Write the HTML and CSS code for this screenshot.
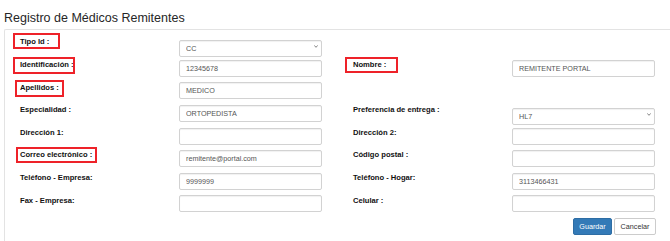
FILE: index.html
```html
<!DOCTYPE html>
<html lang="es">
<head>
  <meta charset="UTF-8" />
  <title>Registro de Médicos Remitentes</title>
  <link rel="stylesheet" href="styles.css">
</head>
<body>
  <h4 class="page-title">Registro de Médicos Remitentes</h4>
  <div class="panel">
    <form class="form">
      <div class="row">
        <div class="group">
          <label class="lbl">Tipo Id :<span class="hl hl-tipo"></span></label>
          <div class="select-wrap">
            <select class="ctrl">
              <option>CC</option>
            </select>
            <svg class="chev" width="4" height="3" viewBox="0 0 4 3"><path d="M0.3 0.4 L2 2.3 L3.7 0.4" fill="none" stroke="#777" stroke-width="0.9"/></svg>
          </div>
        </div>
      </div>
      <div class="row">
        <div class="group">
          <label class="lbl">Identificación :<span class="hl hl-ident"></span></label>
          <input class="ctrl" type="text" value="12345678">
        </div>
        <div class="group">
          <label class="lbl">Nombre :<span class="hl hl-nombre"></span></label>
          <input class="ctrl" type="text" value="REMITENTE PORTAL">
        </div>
      </div>
      <div class="row">
        <div class="group">
          <label class="lbl">Apellidos :<span class="hl hl-apell"></span></label>
          <input class="ctrl" type="text" value="MEDICO">
        </div>
      </div>
      <div class="row">
        <div class="group">
          <label class="lbl">Especialidad :</label>
          <input class="ctrl" type="text" value="ORTOPEDISTA">
        </div>
        <div class="group">
          <label class="lbl">Preferencia de entrega :</label>
          <div class="select-wrap">
            <select class="ctrl">
              <option>HL7</option>
            </select>
            <svg class="chev" width="4" height="3" viewBox="0 0 4 3"><path d="M0.3 0.4 L2 2.3 L3.7 0.4" fill="none" stroke="#777" stroke-width="0.9"/></svg>
          </div>
        </div>
      </div>
      <div class="row">
        <div class="group">
          <label class="lbl">Dirección 1:</label>
          <input class="ctrl" type="text" value="">
        </div>
        <div class="group">
          <label class="lbl">Dirección 2:</label>
          <input class="ctrl" type="text" value="">
        </div>
      </div>
      <div class="row">
        <div class="group">
          <label class="lbl">Correo electrónico :<span class="hl hl-correo"></span></label>
          <input class="ctrl" type="text" value="remitente@portal.com">
        </div>
        <div class="group">
          <label class="lbl">Código postal :</label>
          <input class="ctrl" type="text" value="">
        </div>
      </div>
      <div class="row">
        <div class="group">
          <label class="lbl">Teléfono - Empresa:</label>
          <input class="ctrl" type="text" value="9999999">
        </div>
        <div class="group">
          <label class="lbl">Teléfono - Hogar:</label>
          <input class="ctrl" type="text" value="3113466431">
        </div>
      </div>
      <div class="row">
        <div class="group">
          <label class="lbl">Fax - Empresa:</label>
          <input class="ctrl" type="text" value="">
        </div>
        <div class="group">
          <label class="lbl">Celular :</label>
          <input class="ctrl" type="text" value="">
        </div>
      </div>
      <div class="actions">
        <button type="button" class="btn btn-primary">Guardar</button>
        <button type="button" class="btn btn-default">Cancelar</button>
      </div>
    </form>
  </div>
</body>
</html>
```

FILE: styles.css
```css
html, body {
  margin: 0;
  padding: 0;
  background: #fff;
}
body {
  font-family: "Liberation Sans", Arial, sans-serif;
  color: #333;
}
.page-title {
  margin: 0;
  padding: 9px 0 0 4px;
  height: 20px;
  font-size: 12.5px;
  line-height: 18px;
  font-weight: normal;
  color: #262626;
}
.panel {
  margin-left: 4px;
  height: 212px;
  box-sizing: border-box;
  border: 1px solid #e3e3e3;
  border-right: none;
  border-bottom: none;
  border-top-left-radius: 2px;
  padding: 7.3px 0 0 15px;
}
.form {
  width: 636px;
  display: flex;
  flex-direction: column;
  gap: 5.6px;
}
.row {
  display: flex;
  gap: 31px;
  height: 17px;
}
.group {
  display: flex;
  width: 302px;
}
.lbl {
  position: relative;
  width: 159px;
  flex: none;
  padding-top: 0.2px;
  font-size: 7.6px;
  line-height: 10px;
  font-weight: bold;
  color: #111;
}
.hl {
  position: absolute;
  border: 2px solid #ee2229;
  box-sizing: border-box;
}
.hl-tipo { left: -7px; top: -4.3px; width: 47px; height: 16px; }
.hl-ident { left: -7px; top: -3px; width: 62px; height: 17px; }
.hl-apell { left: -5px; top: -2.5px; width: 49px; height: 17px; }
.hl-nombre { left: -8px; top: -3px; width: 53px; height: 16px; }
.hl-correo { left: -4px; top: -3.3px; width: 81px; height: 16px; }
.ctrl {
  width: 143px;
  height: 17px;
  box-sizing: border-box;
  margin: 0;
  padding: 0 6px;
  border: 1px solid #d2d2d2;
  border-radius: 2px;
  box-shadow: inset 0 1px 1px rgba(0,0,0,0.06);
  background: #fff;
  font-family: inherit;
  font-size: 7.2px;
  color: #555;
  outline: none;
}
select.ctrl {
  appearance: none;
  -webkit-appearance: none;
}
.select-wrap {
  position: relative;
  width: 143px;
  height: 17px;
}
.chev {
  position: absolute;
  right: 4px;
  top: 7.5px;
}
.actions {
  display: flex;
  justify-content: flex-end;
  gap: 2px;
}
.btn {
  height: 17px;
  box-sizing: border-box;
  margin: 0;
  padding: 0;
  border-radius: 2px;
  font-family: inherit;
  font-size: 7.2px;
  cursor: pointer;
}
.btn-primary {
  width: 39px;
  background: #337ab7;
  border: 1px solid #2e6da4;
  color: #fff;
}
.btn-default {
  width: 42px;
  background: #fff;
  border: 1px solid #ccc;
  color: #333;
}
```
